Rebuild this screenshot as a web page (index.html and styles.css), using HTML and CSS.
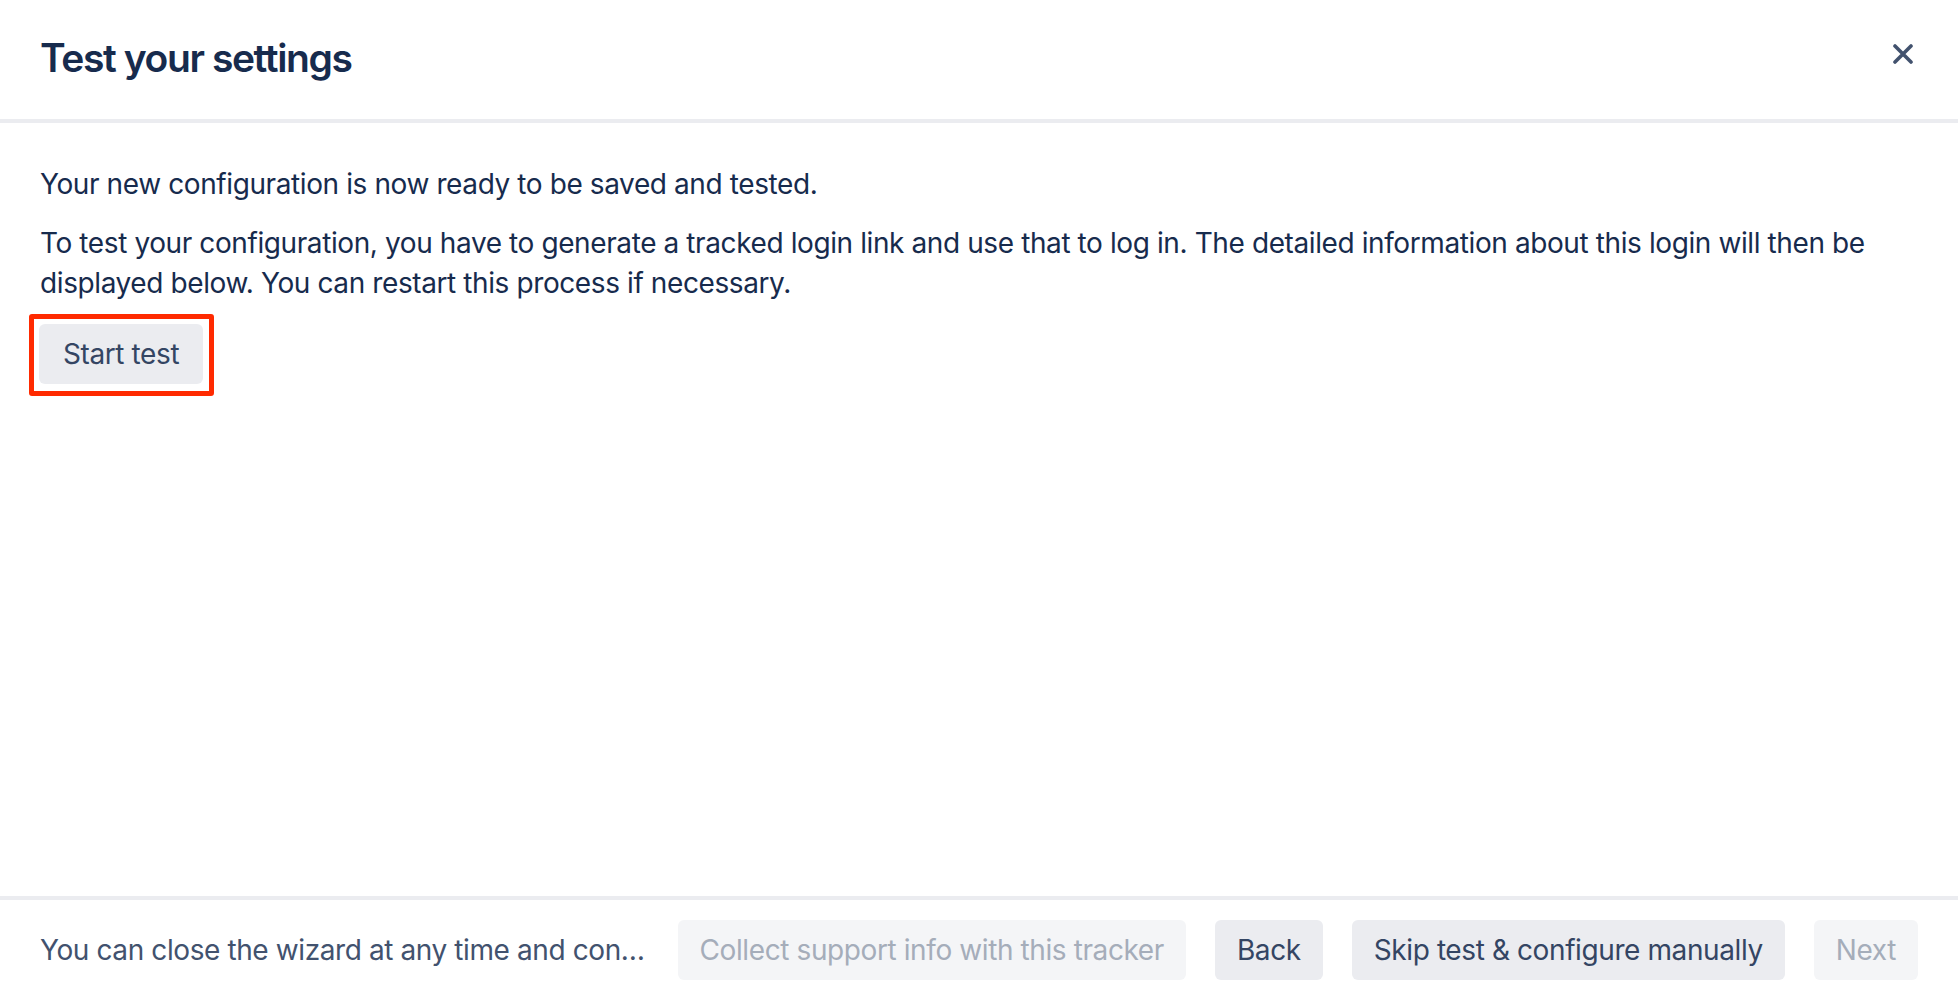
FILE: index.html
```html
<!DOCTYPE html>
<html lang="en">
<head>
<meta charset="utf-8">
<title>Test your settings</title>
<link rel="stylesheet" href="styles.css">
</head>
<body>
<div class="modal">
  <header class="modal-header">
    <h1 class="modal-title">Test your settings</h1>
    <button class="close" type="button" aria-label="Close">
      <svg width="20" height="20" viewBox="0 0 20 20" aria-hidden="true">
        <path d="M2 2 L18 18 M18 2 L2 18" stroke="#42526E" stroke-width="3.6" stroke-linecap="round" fill="none"/>
      </svg>
    </button>
  </header>
  <main class="modal-body">
    <p class="para">Your new configuration is now ready to be saved and tested.</p>
    <p class="para">To test your configuration, you have to generate a tracked login link and use that to log in. The detailed information about this login will then be displayed below. You can restart this process if necessary.</p>
    <div class="action">
      <button class="btn btn-highlight" type="button">Start test</button>
    </div>
  </main>
  <footer class="modal-footer">
    <span class="footer-note">You can close the wizard at any time and continue the configuration later on.</span>
    <button class="btn btn-disabled" type="button" disabled>Collect support info with this tracker</button>
    <button class="btn" type="button">Back</button>
    <button class="btn" type="button">Skip test &amp; configure manually</button>
    <button class="btn btn-disabled" type="button" disabled>Next</button>
  </footer>
</div>
</body>
</html>
```

FILE: styles.css
```css
* { box-sizing: border-box; }

html, body {
  margin: 0;
  padding: 0;
  background: #ffffff;
}

body {
  font-family: Inter, "Noto Sans", "Liberation Sans", sans-serif;
  color: #172B4D;
  letter-spacing: -0.4px;
}

.modal {
  display: flex;
  flex-direction: column;
  height: 998px;
  width: 1958px;
}

.modal-header {
  height: 123px;
  flex: 0 0 auto;
  display: flex;
  align-items: center;
  justify-content: space-between;
  padding: 0 45px 4px 40px;
  border-bottom: 4px solid #EBECF0;
}

.modal-title {
  margin: 0;
  font-size: 39px;
  font-weight: 600;
  line-height: 48px;
  color: #172B4D;
  letter-spacing: -1.4px;
}

.close {
  border: 0;
  background: transparent;
  padding: 0;
  margin: 0 0 8px 0;
  width: 20px;
  height: 20px;
  display: flex;
  cursor: pointer;
}

.modal-body {
  flex: 1 1 auto;
  padding: 41px 40px 0 40px;
}

.para {
  margin: 0 0 19px 0;
  font-size: 28px;
  line-height: 40px;
  color: #172B4D;
}

.action {
  margin-top: 21px;
  display: flex;
}

.btn {
  font-family: inherit;
  font-size: 28px;
  letter-spacing: -0.4px;
  line-height: 40px;
  height: 60px;
  padding: 0 22px;
  border: 0;
  border-radius: 6px;
  background: #EBECF0;
  color: #344563;
  white-space: nowrap;
  flex: 0 0 auto;
  cursor: pointer;
}

.btn-highlight {
  position: relative;
  margin-left: -1px;
  padding: 0 24px;
}

.btn-highlight::after {
  content: "";
  position: absolute;
  top: -10px;
  left: -10px;
  right: -11px;
  bottom: -12px;
  border: 5px solid #FF2A00;
  border-radius: 3px;
  pointer-events: none;
}

.btn-disabled {
  background: #F4F5F7;
  color: #A5ADBA;
  cursor: default;
}

.modal-footer {
  flex: 0 0 auto;
  display: flex;
  align-items: center;
  gap: 29px;
  padding: 20px 40px 18px 40px;
  border-top: 4px solid #EBECF0;
}

.footer-note {
  flex: 1 1 auto;
  min-width: 0;
  overflow: hidden;
  text-overflow: ellipsis;
  white-space: nowrap;
  font-size: 28px;
  line-height: 40px;
  color: #42526E;
}
```
